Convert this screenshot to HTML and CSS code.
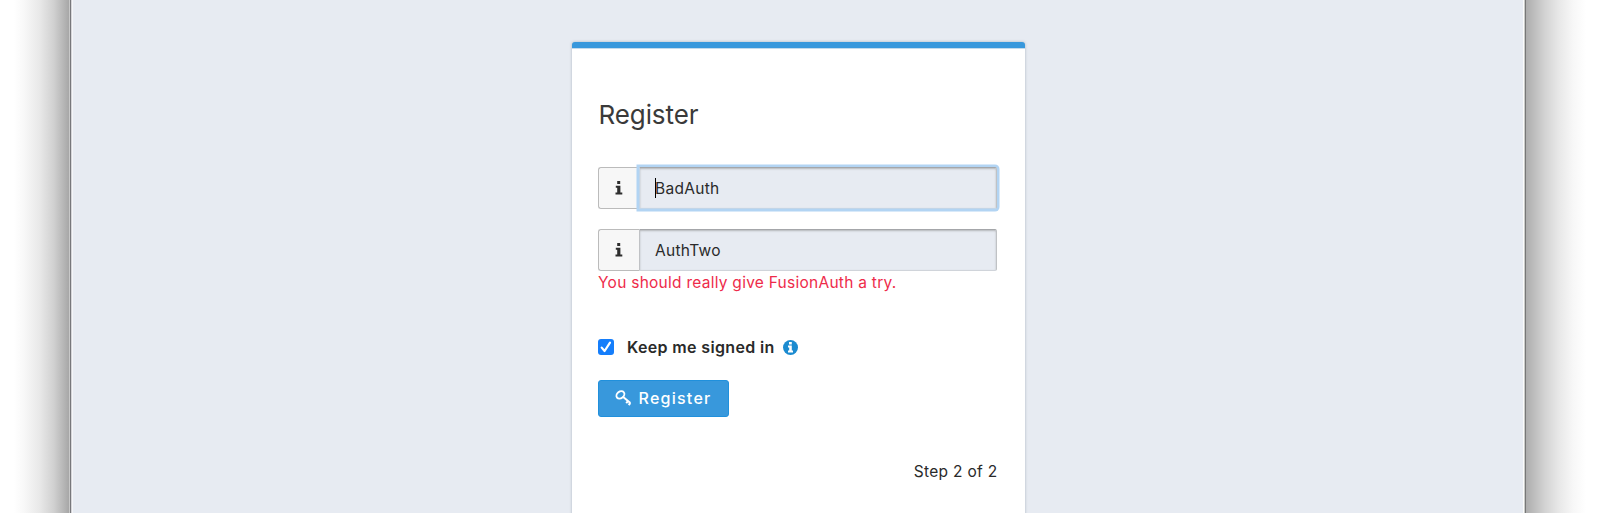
FILE: index.html
```html
<!DOCTYPE html>
<html lang="en">
<head>
<meta charset="utf-8">
<title>Register</title>
<link rel="stylesheet" href="styles.css">
</head>
<body>
<div class="window">
  <main class="panel">
    <h2 class="title">Register</h2>
    <form>
      <div class="field">
        <span class="addon"><svg width="8" height="14" viewBox="0 0 8 14"><path d="M2.2 0h3v3h-3zM.8 4.8h4.6v6.6h1.9v2H.5v-2h1.7V6.8H.8z"/></svg></span>
        <div class="input focused"><span class="caret"></span><span class="value">BadAuth</span></div>
      </div>
      <div class="field second">
        <span class="addon"><svg width="8" height="14" viewBox="0 0 8 14"><path d="M2.2 0h3v3h-3zM.8 4.8h4.6v6.6h1.9v2H.5v-2h1.7V6.8H.8z"/></svg></span>
        <div class="input"><span class="value">AuthTwo</span></div>
      </div>
      <div class="error"><span>You should really give FusionAuth a try.</span></div>
      <div class="remember">
        <span class="checkbox"><svg width="16" height="16" viewBox="0 0 16 16"><path d="M3.7 8.6l2.9 3.4 5.4-8.3" fill="none" stroke="#fff" stroke-width="2.2" stroke-linecap="round" stroke-linejoin="round"/></svg></span>
        <span class="label">Keep me signed in</span>
        <svg class="info" width="15" height="15" viewBox="0 0 15 15"><circle cx="7.5" cy="7.5" r="7.5" fill="#1b8bd0"/><path d="M6 2h2.8v2.4H6zM5 5.6h3.8v4.9H10v2H5v-2h1.2V7.5H5z" fill="#fff"/></svg>
      </div>
      <div class="button">
        <svg width="17" height="16" viewBox="0 0 17 16" fill="none" stroke="#fff"><ellipse cx="5.4" cy="4.9" rx="4.3" ry="3.3" transform="rotate(-38 5.4 4.9)" stroke-width="1.9"/><path d="M7.9 6.8l7.5 6.2M11.2 13.2l1.9-2.2M13.6 15l1.8-2" stroke-width="2"/></svg>
        <span class="button-text">Register</span>
      </div>
    </form>
    <div class="step"><span>Step 2 of 2</span></div>
  </main>
</div>
</body>
</html>
```
FILE: styles.css
```css
* { box-sizing: border-box; }
body {
  margin: 0;
  height: 513px;
  overflow: hidden;
  background: linear-gradient(90deg, #fff 14px, #f8f8f8 24px, #e8e8e8 40px, #d0d0d0 54px, #b5b5b5 64px, #a4a4a4 70px, transparent 70px, transparent 1526px, #adadad 1526px, #bdbdbd 1534px, #d3d3d3 1545px, #e8e8e8 1559px, #f7f7f7 1573px, #fff 1586px);
  font: 15.5px/20px Inter, sans-serif;
  color: #2a2a2a;
}
.window {
  width: 1457px;
  height: 513px;
  margin-left: 69px;
  padding-top: 42px;
  background: #e7ebf2;
  border-left: 1px solid #c8c8c8;
  border-right: 1px solid #777;
  box-shadow: inset 1px 0 #77777b, inset 2px 0 #d5d5d9, inset 3px 0 #f4f5f8, inset -1px 0 #c9cbc9, inset -2px 0 #fbfbfb;
}
.panel {
  width: 453px;
  height: 490px;
  margin-left: 501.5px;
  padding: 0 27px 0 26.5px;
  background: #fff;
  border-top: 6px solid #3898dc;
  border-radius: 3px 3px 0 0;
  box-shadow: inset 0 1px #c4daeb, 0 0 3px rgba(80,105,120,.4);
}
.title {
  margin: 0;
  padding-top: 50px;
  padding-left: .5px;
  height: 119px;
  font-size: 26px;
  line-height: 34px;
  font-weight: 400;
  letter-spacing: -.1px;
  color: #3a3a3a;
}
.field {
  display: flex;
  width: 399px;
  height: 42px;
}
.second { margin-top: 20px; }
.addon {
  width: 41px;
  display: flex;
  align-items: center;
  justify-content: center;
  background: #f7f7f7;
  border: 1px solid #bbb;
  border-right: 0;
  border-radius: 3px 0 0 3px;
  fill: #2e2e2e;
}
.input {
  flex: 1;
  display: flex;
  align-items: center;
  padding-left: 15px;
  background: #e7ebf2;
  border: 1px solid #c0c2c5;
  border-top-color: #a4a6a9;
  border-bottom-color: #d0d4da;
  border-radius: 0 2px 2px 0;
  box-shadow: inset 0 1px 2px #b4b6b9;
}
.focused {
  border-left-color: #c2d5e8;
  border-bottom-color: #c2d5e8;
  box-shadow: inset 0 1px 2px #b4b6b9, 0 0 0 2.5px #b2d4f3;
}
.caret { width: 1px; height: 20px; margin-right: -1px; background: #000; }
.value { padding-top: 2px; letter-spacing: .3px; }
.error { padding-top: 2px; height: 66px; color: #ee2b4a; letter-spacing: .26px; }
.remember { display: flex; align-items: center; height: 20px; }
.checkbox {
  width: 16px;
  height: 16px;
  margin-right: 13px;
  background: #157efb;
  border-radius: 3px;
}
.checkbox svg { display: block; }
.label { font-size: 16px; font-weight: 600; letter-spacing: .35px; }
.info { margin-left: 8.5px; }
.button {
  display: flex;
  align-items: center;
  width: 131px;
  height: 37px;
  margin-top: 23px;
  padding-left: 16px;
  padding-bottom: 1px;
  background: #3898dc;
  border: 1px solid #2090dc;
  border-radius: 3px;
  color: #fff;
}
.button-text { margin-left: 6.5px; font-size: 16px; font-weight: 500; letter-spacing: 1.25px; }
.step { margin-top: 45px; text-align: right; letter-spacing: .3px; }
```
